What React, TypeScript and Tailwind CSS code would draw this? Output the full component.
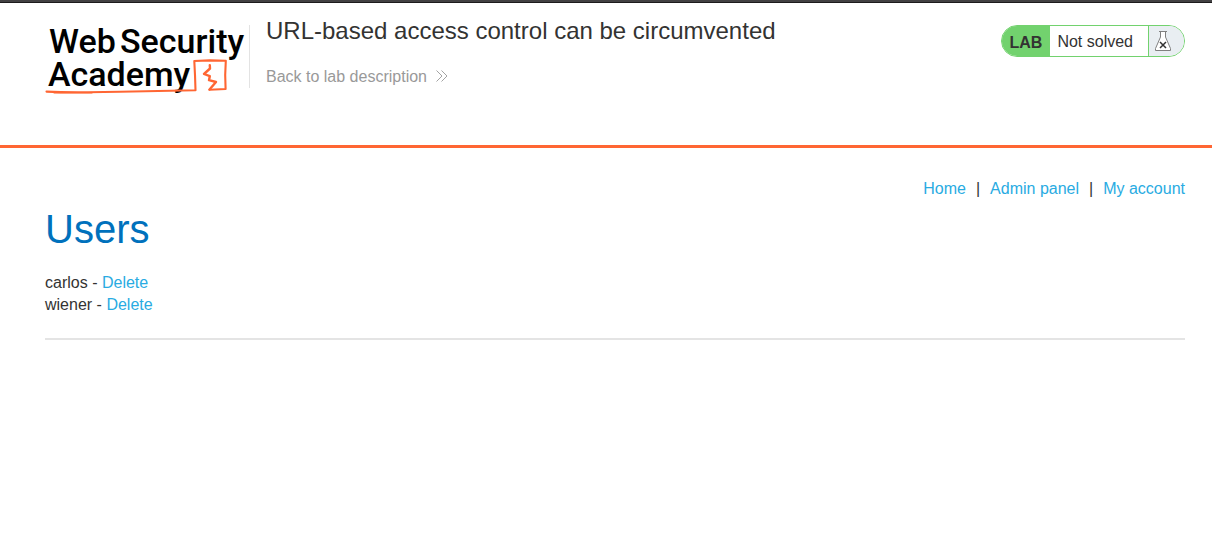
const users = ['carlos', 'wiener'];

const navLinks = ['Home', 'Admin panel', 'My account'];

function AcademyLogo() {
  return (
    <svg
      width="200"
      height="72"
      viewBox="45 24 200 72"
      role="img"
      aria-label="Web Security Academy"
      className="block shrink-0 overflow-visible"
    >
      <g fill="#000" fontFamily="Roboto, sans-serif" fontSize="34" fontWeight="500">
        <text x="49" y="53">Web</text>
        <text x="120" y="53">Security</text>
        <text x="48" y="86">Academy</text>
      </g>
      <g fill="none" stroke="#ff6633" strokeLinecap="round" strokeLinejoin="round">
        <path
          d="M46.500 91.6 Q62 92.4 88 92.2 L120 91.8 L158 91 L195.500 90.300 L195 75 L194.300 61 L210 60.400 L225.800 60.800 L225.200 75 L225.600 89 L209.500 89.800"
          strokeWidth="2.1"
        />
        <path d="M54 92.700 L92 92.700" strokeWidth="1.4" />
        <path
          d="M209.800 65.200 L210 68.500 L204 74 L209.800 76.200 L209 80.200 L216 82 L209.500 89.500"
          strokeWidth="2.4"
        />
      </g>
    </svg>
  );
}

function DoubleChevron() {
  return (
    <svg width="12" height="14" viewBox="0 0 12 14" aria-hidden="true" className="block">
      <path d="M0.500 0.500 L6 6 L0.500 11.500 M5.500 0.500 L11 6 L5.500 11.500" fill="none" stroke="#999" strokeWidth="0.9" />
    </svg>
  );
}

function Flask() {
  return (
    <svg width="16" height="20" viewBox="0 0 16 20" aria-hidden="true" className="block">
      <path
        d="M5.500 0.500 V6 L0.500 17.500 V19.500 H15.500 V17.500 L10.500 6 V0.500"
        fill="#fff"
        stroke="#808080"
        strokeWidth="1"
      />
      <path d="M4 0.500 H12" stroke="#808080" strokeWidth="1" />
      <path d="M5 11 L11 17 M11 11 L5 17" stroke="#333" strokeWidth="1.5" />
    </svg>
  );
}

function LabStatus() {
  return (
    <div className="flex h-8 shrink-0 overflow-hidden rounded-full border border-[#72d26e] text-base leading-8">
      <span className="bg-[#72d26e] px-2 pt-px font-bold">LAB</span>
      <p className="bg-white pl-[7px] pr-[15px]">Not solved</p>
      <span className="flex w-9 shrink-0 items-center border-l border-[#72d26e] bg-[#e9eef2] pl-1.5">
        <Flask />
      </span>
    </div>
  );
}

export default function App() {
  return (
    <div className="min-h-screen bg-white font-['Liberation_Sans',Arial,sans-serif] text-base text-[#333332]">
      <div className="h-[3px] border-b border-[#1c1b1c] bg-[#424142]" />
      <header className="border-b-3 border-[#ff6633] pb-[49px] pl-[45px] pr-[27px] pt-[21px]">
        <div className="flex items-start">
          <AcademyLogo />
          <div className="ml-1 mt-px h-[63px] w-px shrink-0 bg-[#e3e3e3]" />
          <div className="-mt-[7px] ml-4 grow">
            <h2 className="text-2xl leading-7">URL-based access control can be circumvented</h2>
            <a href="#lab" className="mt-[22px] flex items-center gap-[9px] leading-5 text-[#999]">
              Back to lab description
              <DoubleChevron />
            </a>
          </div>
          <div className="mt-px">
            <LabStatus />
          </div>
        </div>
      </header>
      <main className="pl-[45px] pr-[27px] pt-[30px]">
        <nav className="flex justify-end gap-2.5 leading-[22px]">
          {navLinks.map((label, i) => (
            <span key={label} className="flex gap-2.5">
              {i > 0 && <span>|</span>}
              <a href="#nav" className="text-[#29abe2]">
                {label}
              </a>
            </span>
          ))}
        </nav>
        <h1 className="mt-1.5 text-[40px] leading-[46px] text-[#0071bc]">Users</h1>
        <ul className="mt-5 leading-[22px]">
          {users.map((user) => (
            <li key={user}>
              {user} -{' '}
              <a href="#delete" className="text-[#29abe2]">
                Delete
              </a>
            </li>
          ))}
        </ul>
        <hr className="mt-[22px] border-t-2 border-[#e4e4e4]" />
      </main>
    </div>
  );
}
